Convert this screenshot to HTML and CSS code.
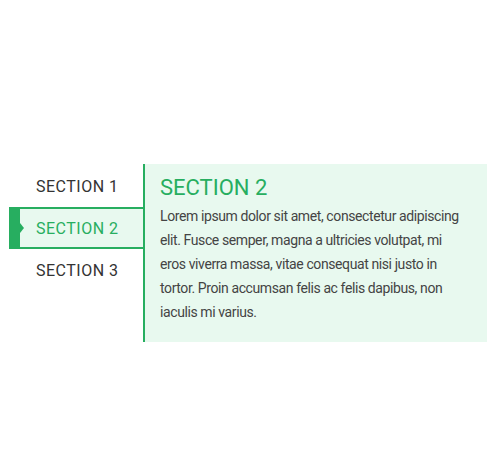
FILE: index.html
```html
<!DOCTYPE html>
<html lang="en">
<head>
  <meta charset="UTF-8" />
  <title>Tabs</title>
  <link rel="stylesheet" href="styles.css">
</head>
<body>
  <div class="tabs">
    <ul class="tab-list">
      <li class="tab">SECTION 1</li>
      <li class="tab active">SECTION 2</li>
      <li class="tab">SECTION 3</li>
    </ul>
    <div class="tab-panel">
      <h2>SECTION 2</h2>
      <p>Lorem ipsum dolor sit amet, consectetur adipiscing elit. Fusce semper, magna a ultricies volutpat, mi eros viverra massa, vitae consequat nisi justo in tortor. Proin accumsan felis ac felis dapibus, non iaculis mi varius.</p>
    </div>
  </div>
</body>
</html>
```

FILE: styles.css
```css
* {
  margin: 0; padding: 0; box-sizing: border-box;
  font-family: Roboto, Arial, sans-serif;
}

body {
  background: #fff;
  color: #333;
}

.tabs {
  display: flex;
  align-items: flex-start;
  width: 478px;
  margin: 164px 0 0 9px;
}

.tab-list {
  list-style: none;
  width: 134px;
  padding-top: 1px;
}

.tab {
  position: relative;
  height: 42px;
  line-height: 43px;
  padding-left: 27px;
  font-size: 16px;
  letter-spacing: 0.5px;
  color: #333;
}

.tab.active {
  background: #e8f9ef;
  color: #27ae60;
  border-top: 2px solid #27ae60;
  border-bottom: 2px solid #27ae60;
  line-height: 39px;
}

.tab.active::before {
  content: "";
  position: absolute;
  left: 0;
  top: 0;
  bottom: 0;
  width: 11px;
  background: #27ae60;
}

.tab.active::after {
  content: "";
  position: absolute;
  left: 11px;
  top: 50%;
  margin-top: -5px;
  border-top: 5px solid transparent;
  border-bottom: 5px solid transparent;
  border-left: 4px solid #27ae60;
}

.tab-panel {
  flex: 1;
  height: 178px;
  background: #e8f9ef;
  border-left: 2px solid #27ae60;
  padding: 11px 21px 0 15px;
}

.tab-panel h2 {
  font-size: 22px;
  font-weight: normal;
  line-height: 26px;
  color: #27ae60;
  margin-bottom: 3px;
}

.tab-panel p {
  font-size: 14px;
  line-height: 24px;
  letter-spacing: -0.4px;
  color: #444;
}
```
